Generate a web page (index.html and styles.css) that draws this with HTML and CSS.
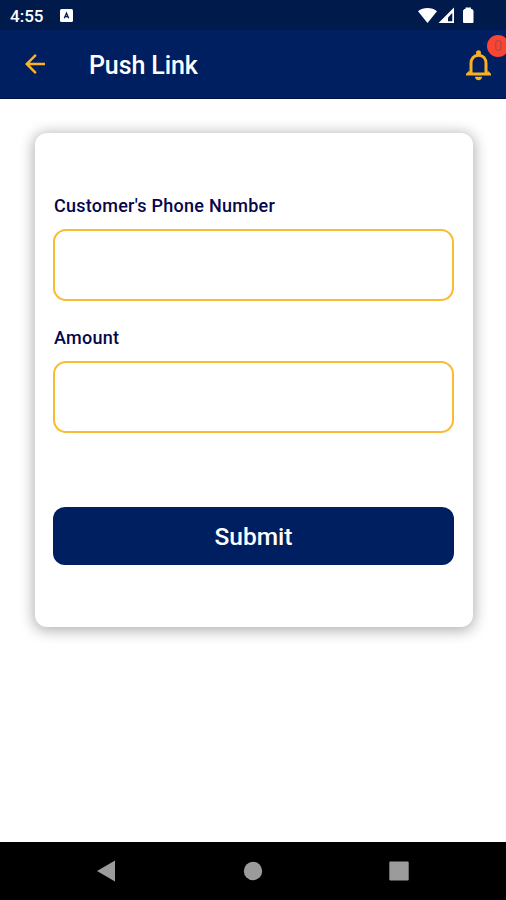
FILE: index.html
```html
<!doctype html>
<html lang="en">
<head>
    <meta charset="UTF-8">
    <meta name="viewport" content="width=device-width, initial-scale=1.0">
    <title>Push Link</title>
    <link rel="stylesheet" href="styles.css">
</head>
<body>
<div class="status-bar">
    <span class="time">4:55</span>
    <svg class="app-icon" viewBox="0 0 13 13">
        <rect width="13" height="13" rx="1.5" fill="#fff"/>
        <path d="M4.300 9.200L6.500 4.200L8.700 9.200M5.200 7.600H7.800" fill="none" stroke="#001a4b" stroke-width="1.300"/>
    </svg>
    <svg class="status-icons" viewBox="0 0 56 18">
        <path d="M0 4.200C5.200 0 13.800 0 19 4.200L9.500 16Z" fill="#fff"/>
        <path d="M36 0.500V16H20.500Z" fill="#fff"/>
        <path d="M34.300 6V14.300H30V10.500Z" fill="#001a4b"/>
        <path d="M47.500 0.500H53V2H54L55.500 3.500V15Q55.500 16 54.500 16H46Q45 16 45 15V3.500L46.500 2H47.500Z" fill="#fff"/>
    </svg>
</div>
<header class="header">
    <svg class="back" viewBox="0 0 24 24">
        <path d="M20 11H7.830l5.590-5.590L12 4l-8 8 8 8 1.410-1.410L7.830 13H20v-2z" fill="#fbb321"/>
    </svg>
    <h1 class="title">Push Link</h1>
    <div class="bell">
        <svg viewBox="0 0 34 34">
            <path d="M10 26V16.500C10 11.500 13 8.200 17.500 8.200S25 11.500 25 16.500V26" fill="none" stroke="#f9b021" stroke-width="3"/>
            <circle cx="17.500" cy="5.700" r="2.500" fill="#f9b021"/>
            <path d="M5 28.500V26.800L8.500 23.500V25.400H26.500V23.500L30 26.800V28.500Z" fill="#f9b021"/>
            <path d="M14 29.800H21C21 31.800 19.500 33.200 17.500 33.200S14 31.800 14 29.800Z" fill="#f9b021"/>
        </svg>
        <span class="badge">0</span>
    </div>
</header>
<main class="content">
    <form class="card">
        <label class="label" for="phone">Customer's Phone Number</label>
        <input class="field" id="phone" type="tel">
        <label class="label" for="amount">Amount</label>
        <input class="field" id="amount" type="text">
        <button class="submit" type="button">Submit</button>
    </form>
</main>
<nav class="nav-bar">
    <svg viewBox="0 0 20 22"><path d="M1 11L19 0.500V21.500Z"/></svg>
    <svg viewBox="0 0 20 22"><circle cx="10" cy="11" r="9.200"/></svg>
    <svg viewBox="0 0 20 22"><rect x="0.300" y="1.500" width="19.400" height="19" rx="1.200"/></svg>
</nav>
</body>
</html>
```
FILE: styles.css
```css
* {
    box-sizing: border-box;
}
body {
    margin: 0;
    height: 900px;
    display: flex;
    flex-direction: column;
    background: #fff;
    font-family: Roboto, sans-serif;
    overflow: hidden;
}
.status-bar {
    height: 30px;
    display: flex;
    align-items: center;
    padding: 1px 32px 0 10px;
    background: #001a4b;
    color: #fff;
}
.time {
    width: 50px;
    font-size: 17px;
    font-weight: 500;
}
.app-icon {
    width: 13px;
    height: 13px;
}
.status-icons {
    width: 56px;
    height: 18px;
    margin-left: auto;
}
.header {
    height: 69px;
    display: flex;
    align-items: center;
    padding: 0 11px 0 20px;
    background: #001f60;
    border-bottom: 1px solid #00114a;
}
.back {
    width: 30px;
    height: 30px;
}
.title {
    margin: 2px 0 0 39px;
    color: #fff;
    font-size: 25px;
    font-weight: 500;
    letter-spacing: -0.1px;
}
.bell {
    position: relative;
    width: 34px;
    height: 34px;
    margin-left: auto;
}
.bell svg {
    display: block;
    width: 34px;
    height: 34px;
}
.badge {
    position: absolute;
    top: -12px;
    left: 26px;
    width: 22px;
    height: 22px;
    border-radius: 50%;
    background: #fb4534;
    color: #b5493f;
    font-size: 15px;
    line-height: 22px;
    text-align: center;
}
.content {
    flex: 1;
    padding: 34px 33px 0 35px;
}
.card {
    height: 494px;
    display: flex;
    flex-direction: column;
    padding: 62px 19px 0 18px;
    border-radius: 12px;
    background: #fff;
    box-shadow: 0 2px 14px 2px rgba(0, 0, 0, 0.3);
}
.label {
    height: 22px;
    margin: 0 0 12px 1px;
    color: #06064c;
    font-size: 18px;
    font-weight: 500;
    line-height: 22px;
    letter-spacing: 0.25px;
}
.field {
    height: 72px;
    margin: 0 0 26px;
    padding: 0 16px;
    border: 2px solid #fbba34;
    border-radius: 13px;
    background: #fff;
    font: 18px Roboto, sans-serif;
    outline: none;
}
.submit {
    height: 58px;
    margin-top: 48px;
    border: none;
    border-radius: 12px;
    background: #001f60;
    color: #fff;
    font: 500 24.5px Roboto, sans-serif;
}
.nav-bar {
    height: 58px;
    display: flex;
    justify-content: space-between;
    align-items: center;
    padding: 0 97px 0 96px;
    background: #000;
}
.nav-bar svg {
    width: 20px;
    height: 22px;
    fill: #9b9b9b;
}
```
